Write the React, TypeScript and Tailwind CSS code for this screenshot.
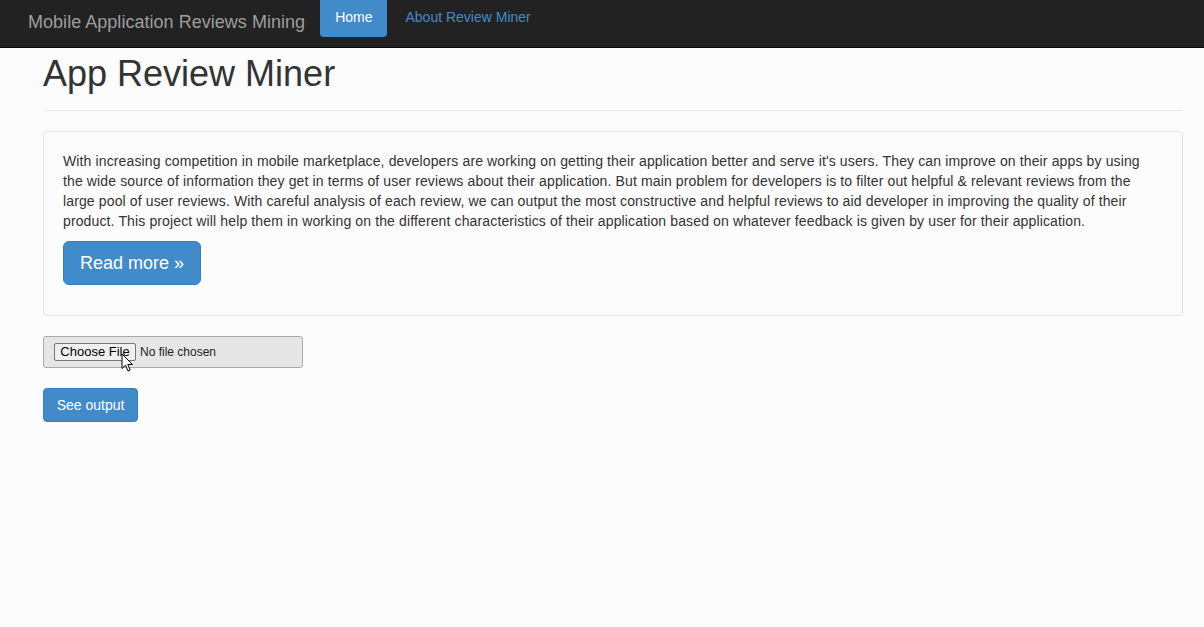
import React from 'react';

const App: React.FC = () => {
    // Intro text lines are broken exactly where the reference wraps them
    const intro = [
        "With increasing competition in mobile marketplace, developers are working on getting their application better and serve it's users. They can improve on their apps by using",
        "the wide source of information they get in terms of user reviews about their application. But main problem for developers is to filter out helpful & relevant reviews from the",
        "large pool of user reviews. With careful analysis of each review, we can output the most constructive and helpful reviews to aid developer in improving the quality of their",
        "product. This project will help them in working on the different characteristics of their application based on whatever feedback is given by user for their application.",
    ];

    return (
        <div className="min-h-[627px] bg-[#fcfcfc] text-[#333] font-['Liberation_Sans',Arial,sans-serif]">
            {/* NAVBAR */}
            <nav className="h-[48px] bg-[#222] border-b border-[#080808] flex items-start">
                <a className="pl-[28px] pt-[12px] text-[18px] leading-[20px] text-[#9d9d9d] mr-[15px] tracking-[0.03px]">
                    Mobile Application Reviews Mining
                </a>
                <a className="px-[15px] pt-[7px] pb-[10px] text-[14px] leading-[20px] text-white bg-[#428bca] rounded-b-[4px]">
                    Home
                </a>
                <a className="ml-[3px] px-[15px] pt-[7px] text-[14px] leading-[20px] text-[#428bca]">
                    About Review Miner
                </a>
            </nav>

            <div className="ml-[43px] w-[1140px]">
                <h1 className="mt-[6px] pb-[16px] border-b border-[#eee] text-[36px] leading-[39.6px] font-normal">
                    App Review Miner
                </h1>

                <div className="mt-[20px] border border-[#e3e3e3] rounded-[4px] px-[19px] pt-[19px] pb-[30px]">
                    <p className="text-[14px] leading-[20px] text-[#333] tracking-[0.13px]">
                        {intro.map((line, i) => (
                            <span key={i} className="block whitespace-nowrap">{line}</span>
                        ))}
                    </p>
                    <button className="mt-[10px] h-[44px] px-[16px] bg-[#428bca] border border-[#357ebd] rounded-[6px] text-white text-[18px] leading-[24px]">
                        Read more &raquo;
                    </button>
                </div>

                {/* FILE INPUT (drawn, not native) */}
                <div className="relative mt-[20px] w-[260px] h-[32px] bg-[#e6e6e6] border border-[#aaa] rounded-[3px] flex items-start pl-[10px] pt-[6px]">
                    <span className="h-[18px] w-[82px] flex items-center justify-center bg-[#efefef] border border-[#767676] rounded-[2px] text-[13px] text-black leading-none">
                        Choose File
                    </span>
                    <span className="ml-[4px] mt-[1px] text-[12px] leading-[16px] text-[#222]">No file chosen</span>
                    <svg className="absolute left-[77px] top-[16px]" width="13" height="20" viewBox="0 0 13 20">
                        <path d="M1 1 L1 15.5 L4.5 12.2 L7 18 L9.2 17 L6.8 11.5 L11.5 11.5 Z" fill="white" stroke="black" strokeWidth="1" strokeLinejoin="miter" />
                    </svg>
                </div>

                <button className="mt-[20px] h-[34px] w-[95px] bg-[#428bca] border border-[#357ebd] rounded-[4px] text-white text-[14px] leading-[20px]">
                    See output
                </button>
            </div>
        </div>
    );
};

export default App;
